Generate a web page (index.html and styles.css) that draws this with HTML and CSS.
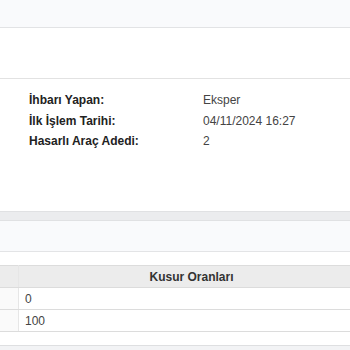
FILE: index.html
```html
<!DOCTYPE html>
<html lang="tr">
<head>
  <meta charset="UTF-8" />
  <meta name="viewport" content="width=device-width, initial-scale=1.0"/>
  <title>İhbar Detay</title>
  <link rel="stylesheet" href="styles.css">
</head>
<body>
  <div class="topbar"></div>
  <div class="spacer"></div>

  <div class="info">
    <div class="row">
      <span class="label">İhbarı Yapan:</span>
      <span class="value">Eksper</span>
    </div>
    <div class="row">
      <span class="label">İlk İşlem Tarihi:</span>
      <span class="value">04/11/2024 16:27</span>
    </div>
    <div class="row">
      <span class="label">Hasarlı Araç Adedi:</span>
      <span class="value">2</span>
    </div>
  </div>

  <div class="divider"></div>
  <div class="panel-head"></div>

  <div class="table-wrap">
    <table class="grid">
      <thead>
        <tr>
          <th class="idx"></th>
          <th>Kusur Oranları</th>
        </tr>
      </thead>
      <tbody>
        <tr>
          <td class="idx"></td>
          <td>0</td>
        </tr>
        <tr>
          <td class="idx"></td>
          <td>100</td>
        </tr>
      </tbody>
    </table>
  </div>

  <div class="footer"></div>
</body>
</html>
```

FILE: styles.css
```css
body {
  margin: 0;
  padding: 0;
  background: #fff;
  font-family: 'Liberation Sans', Arial, sans-serif;
  font-size: 12px;
  color: #333;
  overflow: hidden;
}

.topbar {
  height: 27px;
  background: #f9fafc;
  border-bottom: 1px solid #e2e3e5;
}

.spacer {
  height: 50px;
  border-bottom: 1px solid #e2e2e2;
}

.info {
  padding: 11px 0 0 29px;
  height: 121px;
}

.row {
  display: flex;
  height: 20.5px;
  line-height: 20px;
}

.label {
  width: 174px;
  font-weight: bold;
  color: #222;
}

.value {
  color: #444;
}

.divider {
  height: 8px;
  background: #ebecee;
  border-top: 1px solid #e0e1e3;
  border-bottom: 1px solid #e0e1e3;
}

.panel-head {
  height: 30px;
  background: #f9fafc;
  border-bottom: 1px solid #e3e4e6;
}

.table-wrap {
  padding-top: 13px;
}

.grid {
  width: 364px;
  border-collapse: collapse;
  border-top: 1px solid #dcdcdc;
}

.grid th,
.grid td {
  height: 21px;
  padding: 0 6px;
  border-bottom: 1px solid #dcdcdc;
  text-align: left;
  font-weight: normal;
}

.grid th {
  background: #ececec;
  font-weight: bold;
  color: #333;
  text-align: center;
}

.grid td {
  color: #444;
}

.grid .idx {
  width: 6px;
  border-right: 1px solid #e6e6e6;
}

.grid td.idx {
  background: #fafafa;
}

.footer {
  margin-top: 13px;
  height: 10px;
  background: #f2f3f5;
  border-top: 1px solid #dedfe1;
}
```
